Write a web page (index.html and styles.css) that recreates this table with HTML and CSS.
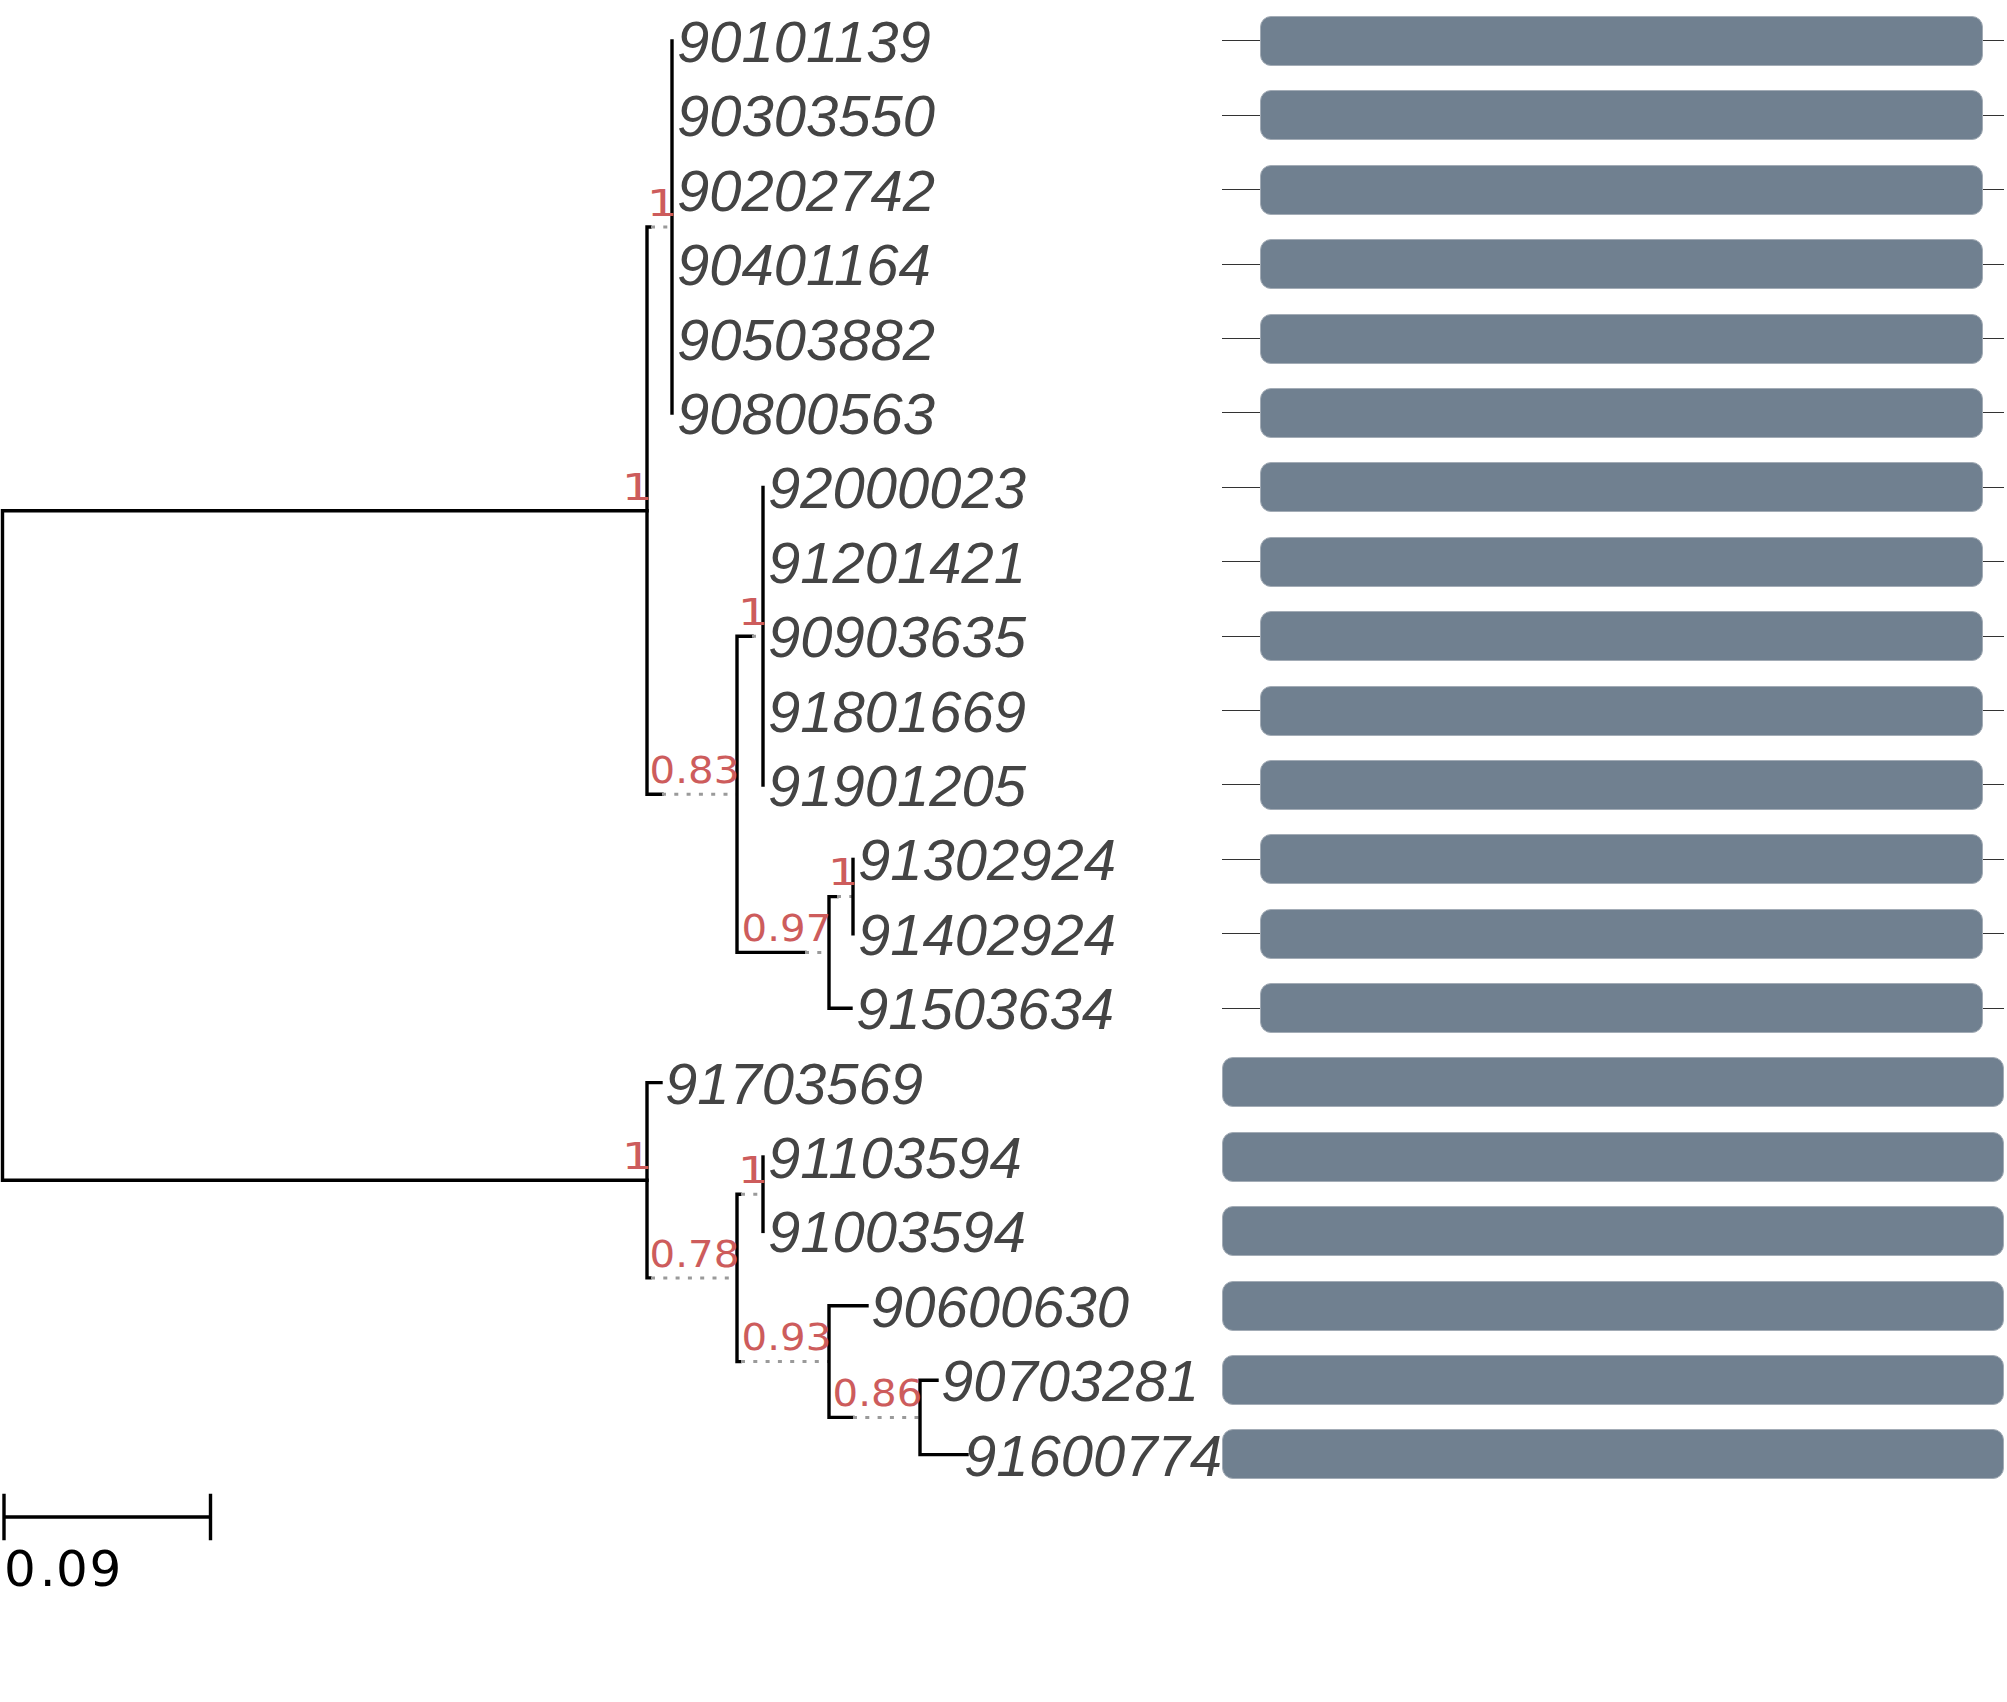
FILE: index.html
```html
<!DOCTYPE html>
<html lang="en">
<head>
<meta charset="utf-8">
<title>Phylogenetic tree</title>
<link rel="stylesheet" href="styles.css">
</head>
<body>
<div class="figure">
  <svg class="tree" width="1222" height="1702" viewBox="0 0 1222 1702" xmlns="http://www.w3.org/2000/svg">
    <!-- root -->
    <path class="edge" d="M2.5 510.7 V1180.25 M2.5 510.7 H647 M2.5 1180.25 H647"/>
    <!-- clade A -->
    <path class="edge" d="M647 227 V794.3 M647 227 H650 M647 794.3 H662"/>
    <path class="ext" d="M651 227 H672 M662 794.3 H737"/>
    <path class="edge" d="M672 41 V413"/>
    <path class="edge" d="M737 636.2 V952.4 M737 636.2 H752 M737 952.4 H805"/>
    <path class="ext" d="M752 636.2 H763 M805 952.4 H829"/>
    <path class="edge" d="M763 487.4 V785"/>
    <path class="edge" d="M829 896.6 V1008.2 M829 896.6 H837 M829 1008.2 H851"/>
    <path class="ext" d="M837 896.6 H853"/>
    <path class="edge" d="M853 859.4 V933.8"/>
    <!-- clade B -->
    <path class="edge" d="M647 1082.6 V1277.9 M647 1082.6 H661 M647 1277.9 H650"/>
    <path class="ext" d="M651 1277.9 H737"/>
    <path class="edge" d="M737 1194.2 V1361.6 M737 1194.2 H740 M737 1361.6 H740"/>
    <path class="ext" d="M741 1194.2 H763 M741 1361.6 H829"/>
    <path class="edge" d="M763 1157 V1231.4"/>
    <path class="edge" d="M829 1305.8 V1417.4 M829 1305.8 H867 M829 1417.4 H853"/>
    <path class="ext" d="M853 1417.4 H920"/>
    <path class="edge" d="M920 1380.2 V1454.6 M920 1380.2 H937 M920 1454.6 H967"/>

    <!-- support values -->
    <text class="support" x="621.7" y="499.5" textLength="30.7" lengthAdjust="spacingAndGlyphs">1</text>
    <text class="support" x="646.7" y="215.5" textLength="30.7" lengthAdjust="spacingAndGlyphs">1</text>
    <text class="support" x="649.6" y="782.5" textLength="89.7" lengthAdjust="spacingAndGlyphs">0.83</text>
    <text class="support" x="737.7" y="625" textLength="30.7" lengthAdjust="spacingAndGlyphs">1</text>
    <text class="support" x="741.6" y="941" textLength="89.7" lengthAdjust="spacingAndGlyphs">0.97</text>
    <text class="support" x="827.7" y="885.3" textLength="30.7" lengthAdjust="spacingAndGlyphs">1</text>
    <text class="support" x="621.7" y="1169" textLength="30.7" lengthAdjust="spacingAndGlyphs">1</text>
    <text class="support" x="649.6" y="1266.5" textLength="89.7" lengthAdjust="spacingAndGlyphs">0.78</text>
    <text class="support" x="737.7" y="1182.5" textLength="30.7" lengthAdjust="spacingAndGlyphs">1</text>
    <text class="support" x="741.6" y="1349.5" textLength="89.7" lengthAdjust="spacingAndGlyphs">0.93</text>
    <text class="support" x="832.6" y="1405.5" textLength="89.7" lengthAdjust="spacingAndGlyphs">0.86</text>

    <!-- leaf names -->
    <text class="leaf" x="677" y="62">90101139</text>
    <text class="leaf" x="677" y="136.4">90303550</text>
    <text class="leaf" x="677" y="210.8">90202742</text>
    <text class="leaf" x="677" y="285.2">90401164</text>
    <text class="leaf" x="677" y="359.6">90503882</text>
    <text class="leaf" x="677" y="434">90800563</text>
    <text class="leaf" x="768" y="508.4">92000023</text>
    <text class="leaf" x="768" y="582.8">91201421</text>
    <text class="leaf" x="768" y="657.2">90903635</text>
    <text class="leaf" x="768" y="731.6">91801669</text>
    <text class="leaf" x="768" y="806">91901205</text>
    <text class="leaf" x="858" y="880.4">91302924</text>
    <text class="leaf" x="858" y="954.8">91402924</text>
    <text class="leaf" x="856" y="1029.2">91503634</text>
    <text class="leaf" x="665" y="1103.6">91703569</text>
    <text class="leaf" x="768" y="1178">91103594</text>
    <text class="leaf" x="768" y="1252.4">91003594</text>
    <text class="leaf" x="871" y="1326.8">90600630</text>
    <text class="leaf" x="941" y="1401.2">90703281</text>
    <text class="leaf" x="964" y="1475.6">91600774</text>

    <!-- scale bar -->
    <path class="edge" d="M4 1517 H210.5 M4 1495.5 V1538.5 M210.5 1495.5 V1538.5"/>
    <text class="scale-label" x="4 39.7 56 89.5" y="1586">0.09</text>
  </svg>

  <div class="tracks">
    <div class="track"><span class="rail rail-left"></span><span class="bar bar-short"></span><span class="rail rail-right"></span></div>
    <div class="track"><span class="rail rail-left"></span><span class="bar bar-short"></span><span class="rail rail-right"></span></div>
    <div class="track"><span class="rail rail-left"></span><span class="bar bar-short"></span><span class="rail rail-right"></span></div>
    <div class="track"><span class="rail rail-left"></span><span class="bar bar-short"></span><span class="rail rail-right"></span></div>
    <div class="track"><span class="rail rail-left"></span><span class="bar bar-short"></span><span class="rail rail-right"></span></div>
    <div class="track"><span class="rail rail-left"></span><span class="bar bar-short"></span><span class="rail rail-right"></span></div>
    <div class="track"><span class="rail rail-left"></span><span class="bar bar-short"></span><span class="rail rail-right"></span></div>
    <div class="track"><span class="rail rail-left"></span><span class="bar bar-short"></span><span class="rail rail-right"></span></div>
    <div class="track"><span class="rail rail-left"></span><span class="bar bar-short"></span><span class="rail rail-right"></span></div>
    <div class="track"><span class="rail rail-left"></span><span class="bar bar-short"></span><span class="rail rail-right"></span></div>
    <div class="track"><span class="rail rail-left"></span><span class="bar bar-short"></span><span class="rail rail-right"></span></div>
    <div class="track"><span class="rail rail-left"></span><span class="bar bar-short"></span><span class="rail rail-right"></span></div>
    <div class="track"><span class="rail rail-left"></span><span class="bar bar-short"></span><span class="rail rail-right"></span></div>
    <div class="track"><span class="rail rail-left"></span><span class="bar bar-short"></span><span class="rail rail-right"></span></div>
    <div class="track"><span class="bar bar-full"></span></div>
    <div class="track"><span class="bar bar-full"></span></div>
    <div class="track"><span class="bar bar-full"></span></div>
    <div class="track"><span class="bar bar-full"></span></div>
    <div class="track"><span class="bar bar-full"></span></div>
    <div class="track"><span class="bar bar-full"></span></div>
  </div>
</div>
</body>
</html>
```
FILE: styles.css
```css
html, body {
  margin: 0;
  padding: 0;
  background: #ffffff;
}

.figure {
  display: flex;
  align-items: flex-start;
  width: 2007px;
  height: 1702px;
  overflow: hidden;
}

.tree {
  flex: none;
  display: block;
}

.edge {
  fill: none;
  stroke: #000000;
  stroke-width: 3.4;
  stroke-linecap: square;
}

.ext {
  fill: none;
  stroke: #9a9a9a;
  stroke-width: 3;
  stroke-dasharray: 4 8.3;
}

.support {
  font-family: "DejaVu Sans", Verdana, sans-serif;
  font-size: 37.5px;
  fill: #cd5c5c;
}

.leaf {
  font-family: "Liberation Sans", Arial, sans-serif;
  font-style: italic;
  font-size: 58px;
  fill: #444444;
}

.scale-label {
  font-family: "DejaVu Sans", Verdana, sans-serif;
  font-size: 50px;
  fill: #000000;
}

.tracks {
  flex: none;
  width: 785px;
  display: flex;
  flex-direction: column;
  padding-top: 3.8px;
}

.track {
  height: 74.4px;
  display: flex;
  align-items: center;
}

.rail {
  display: block;
  height: 1px;
  background: #333333;
}

.rail-left {
  width: 38px;
}

.rail-right {
  width: 21px;
}

.bar {
  display: block;
  box-sizing: border-box;
  height: 50px;
  background: #708090;
  border: 1px solid #a3acb6;
  border-radius: 11px;
}

.bar-short {
  width: 723px;
}

.bar-full {
  width: 782px;
}
```
